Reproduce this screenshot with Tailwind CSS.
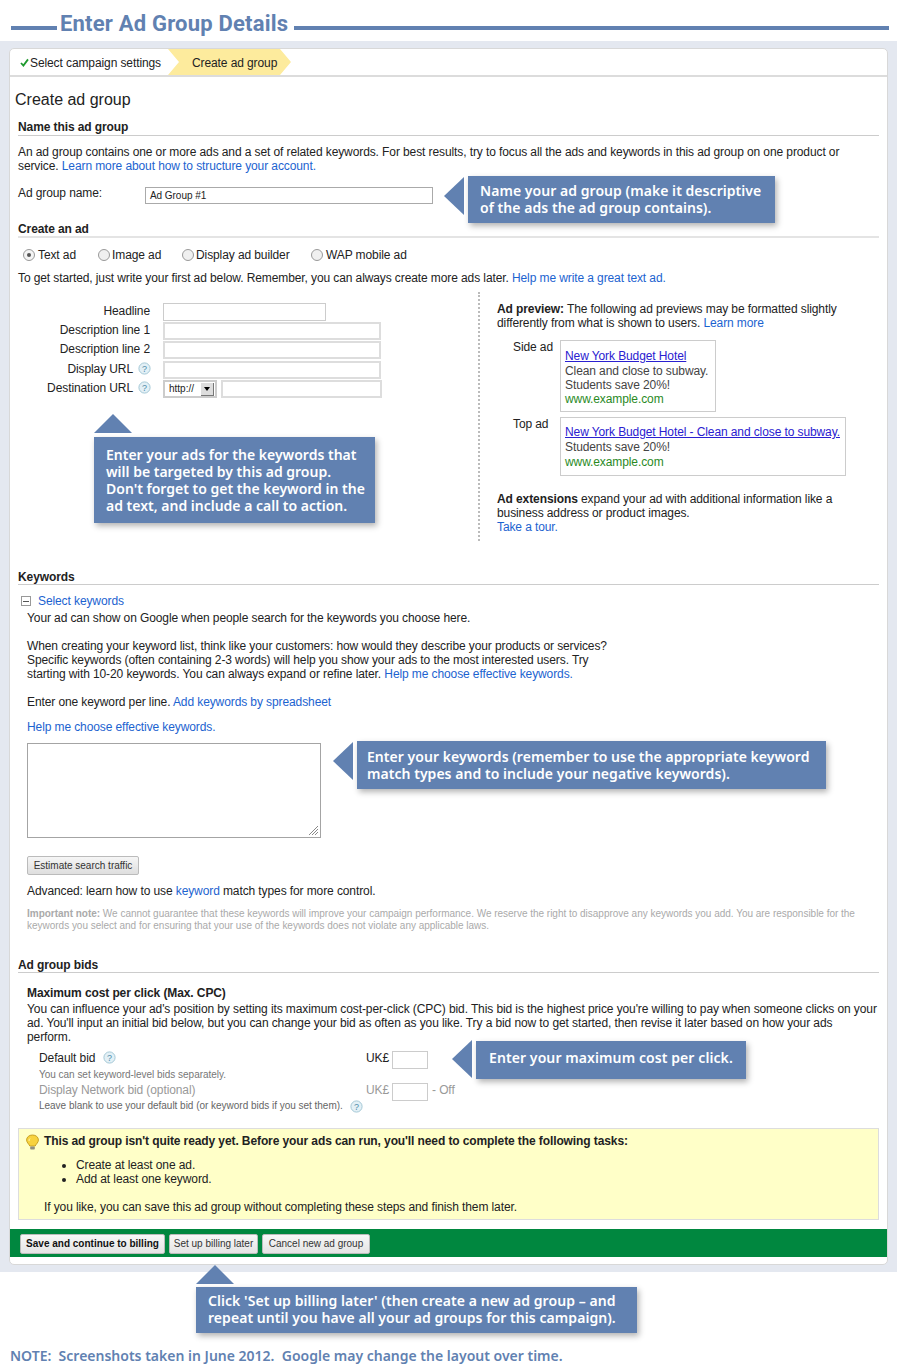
<!DOCTYPE html>
<html lang="en">
<head>
<meta charset="UTF-8" />
<title>Enter Ad Group Details</title>
<script src="https://cdn.jsdelivr.net/npm/@tailwindcss/browser@4"></script>
</head>
<body class="relative w-[900px] h-[1370px] bg-white overflow-hidden font-['Liberation_Sans',sans-serif] text-[12px] leading-[14px] tracking-[-0.1px] text-[#222]">

  <!-- page title -->
  <div class="h-[41px] flex items-start pl-[11px] pr-[11px]">
    <div class="w-[46px] h-[4px] mt-[26px] bg-[#6181b1]"></div>
    <div class="ml-[3px] mt-[10px] font-['Roboto',sans-serif] font-bold text-[22px] leading-[28px] tracking-[0.2px] text-[#6181b1] whitespace-nowrap">Enter Ad Group Details</div>
    <div class="flex-1 h-[4px] mt-[26px] ml-[6px] bg-[#6181b1]"></div>
  </div>

  <!-- grey panel -->
  <div class="w-[897px] h-[1231px] bg-[#e4e8f0] pt-[7px] pl-[9px]">
    <div class="w-[879px] h-[1217px] bg-white border border-[#d8d8d8] rounded-[5px] overflow-hidden">

      <!-- steps -->
      <div class="h-[28px] border-b-2 border-[#dcdcdc] flex items-center">
        <svg class="ml-[10px] mt-[1px] w-[9px] h-[9px]" viewBox="0 0 9 9"><path d="M1 5 L3.4 7.6 L8 1.4" fill="none" stroke="#1f9a2f" stroke-width="1.8"/></svg>
        <span class="ml-[1px] mt-[2px] w-[138px]">Select campaign settings</span>
        <div class="w-[123px] h-[26px] bg-[#fdeb9d] [clip-path:polygon(0_0,112px_0,123px_50%,112px_100%,0_100%,11px_50%)] pl-[24px] leading-[28px]">Create ad group</div>
      </div>

      <div class="pl-[8px] pr-[8px]">
        <h1 class="ml-[-3px] mt-[13px] text-[16px] leading-[20px] tracking-normal text-[#222]">Create ad group</h1>

        <!-- name section -->
        <div class="mt-[10px] h-[16px] font-bold border-b border-[#ccc]">Name this ad group</div>
        <p class="mt-[9px]">An ad group contains one or more ads and a set of related keywords. For best results, try to focus all the ads and keywords in this ad group on one product or<br />service. <a class="text-[#1c63d0]">Learn more about how to structure your account.</a></p>
        <div class="mt-[14px] h-[16px] flex">
          <div class="w-[127px] mt-[-1px]">Ad group name:</div>
          <div class="w-[288px] h-[17px] border border-[#aaa] pl-[4px] text-[10px] leading-[15px] tracking-[-0.05px]">Ad Group #1</div>
        </div>

        <!-- ad section -->
        <div class="mt-[19px] h-[16px] font-bold border-b-2 border-[#e4e4e4]">Create an ad</div>
        <div class="mt-[10px] pl-[5px] flex">
          <label class="w-[75px] flex items-center gap-[3px]"><span class="w-[12px] h-[12px] rounded-full border border-[#999] bg-[#f4f4f4] flex items-center justify-center"><span class="w-[4px] h-[4px] rounded-full bg-[#555]"></span></span>Text ad</label>
          <label class="w-[84px] flex items-center gap-[2px]"><span class="w-[12px] h-[12px] rounded-full border border-[#999] bg-[#f0f0f0]"></span>Image ad</label>
          <label class="w-[129px] flex items-center gap-[2px]"><span class="w-[12px] h-[12px] rounded-full border border-[#999] bg-[#f0f0f0]"></span>Display ad builder</label>
          <label class="flex items-center gap-[3px]"><span class="w-[12px] h-[12px] rounded-full border border-[#999] bg-[#f0f0f0]"></span>WAP mobile ad</label>
        </div>
        <p class="mt-[9px]">To get started, just write your first ad below. Remember, you can always create more ads later. <a class="text-[#1c63d0]">Help me write a great text ad.</a></p>

        <!-- ad form + preview -->
        <div class="mt-[7px] h-[249px] flex">
          <div class="w-[460px] pt-[11px]">
            <div class="h-[18px] flex"><div class="w-[132px] pt-[1px] text-right">Headline</div><div class="ml-[13px] w-[163px] h-[18px] border border-[#ccc]"></div></div>
            <div class="mt-[1px] h-[18px] flex"><div class="w-[132px] pt-[1px] text-right">Description line 1</div><div class="ml-[13px] w-[218px] h-[18px] border-2 border-[#ddd]"></div></div>
            <div class="mt-[1px] h-[18px] flex"><div class="w-[132px] pt-[1px] text-right">Description line 2</div><div class="ml-[13px] w-[218px] h-[18px] border-2 border-[#ddd]"></div></div>
            <div class="mt-[2px] h-[18px] flex">
              <div class="w-[115px] pt-[1px] text-right">Display URL</div>
              <svg class="ml-[5px] mt-[1px] w-[13px] h-[13px]" viewBox="0 0 13 13"><circle cx="6.5" cy="6.5" r="5.6" fill="#e3f0f6" stroke="#a4c8d6"/><text x="6.5" y="9.6" text-anchor="middle" font-size="9" fill="#4f8cab" font-family="Liberation Sans">?</text></svg>
              <div class="ml-[12px] w-[218px] h-[18px] border-2 border-[#ddd]"></div>
            </div>
            <div class="mt-[1px] h-[18px] flex">
              <div class="w-[115px] pt-[1px] text-right">Destination URL</div>
              <svg class="ml-[5px] mt-[1px] w-[13px] h-[13px]" viewBox="0 0 13 13"><circle cx="6.5" cy="6.5" r="5.6" fill="#e3f0f6" stroke="#a4c8d6"/><text x="6.5" y="9.6" text-anchor="middle" font-size="9" fill="#4f8cab" font-family="Liberation Sans">?</text></svg>
              <div class="ml-[12px] w-[54px] h-[18px] border-2 border-[#ccc] flex items-center pl-[4px] text-[10px] tracking-normal">
                http://
                <span class="ml-auto mr-[1px] w-[13px] h-[13px] bg-[#ddd] border-r border-b border-[#777] flex items-center justify-center"><span class="w-0 h-0 border-l-[3px] border-r-[3px] border-t-[4px] border-l-transparent border-r-transparent border-t-black"></span></span>
              </div>
              <div class="ml-[4px] w-[161px] h-[18px] border-2 border-[#ddd]"></div>
            </div>
          </div>

          <div class="border-l-2 border-dotted border-[#bbb] pl-[17px] pt-[10px] flex-1">
            <p><b>Ad preview:</b> The following ad previews may be formatted slightly<br />differently from what is shown to users. <a class="text-[#1c63d0]">Learn more</a></p>
            <div class="mt-[10px] flex">
              <div class="w-[63px] pl-[16px] whitespace-nowrap">Side ad</div>
              <div class="w-[156px] h-[72px] border border-[#ccc] pl-[4px] pt-[8px] text-[#444]">
                <a class="text-[#2a20d0] underline">New York Budget Hotel</a>
                <div class="mt-[1px]">Clean and close to subway.</div>
                <div>Students save 20%!</div>
                <div class="text-[#2a8a1f]">www.example.com</div>
              </div>
            </div>
            <div class="mt-[5px] flex">
              <div class="w-[63px] pl-[16px] whitespace-nowrap">Top ad</div>
              <div class="w-[286px] h-[59px] border border-[#ccc] pl-[4px] pt-[7px] text-[#444]">
                <a class="text-[#2a20d0] underline whitespace-nowrap">New York Budget Hotel - Clean and close to subway.</a>
                <div class="mt-[1px]">Students save 20%!</div>
                <div class="mt-[1px] text-[#2a8a1f]">www.example.com</div>
              </div>
            </div>
            <p class="mt-[16px]"><b>Ad extensions</b> expand your ad with additional information like a<br />business address or product images.<br /><a class="text-[#1c63d0]">Take a tour.</a></p>
          </div>
        </div>

        <!-- keywords section -->
        <div class="mt-[29px] h-[15px] font-bold border-b border-[#ccc]">Keywords</div>
        <div class="mt-[9px] flex items-center">
          <span class="ml-[3px] w-[10px] h-[10px] border border-[#999] flex items-center justify-center"><span class="w-[6px] h-[1px] bg-[#555]"></span></span>
          <a class="ml-[7px] text-[#1c63d0]">Select keywords</a>
        </div>
        <div class="pl-[9px]">
          <p class="mt-[3px]">Your ad can show on Google when people search for the keywords you choose here.</p>
          <p class="mt-[14px]">When creating your keyword list, think like your customers: how would they describe your products or services?<br />Specific keywords (often containing 2-3 words) will help you show your ads to the most interested users. Try<br />starting with 10-20 keywords. You can always expand or refine later. <a class="text-[#1c63d0]">Help me choose effective keywords.</a></p>
          <p class="mt-[14px]">Enter one keyword per line. <a class="text-[#1c63d0]">Add keywords by spreadsheet</a></p>
          <p class="mt-[11px]"><a class="text-[#1c63d0]">Help me choose effective keywords.</a></p>
          <div class="relative mt-[9px] w-[294px] h-[95px] border border-[#a4a4a4]">
            <svg class="absolute right-[2px] bottom-[2px] w-[9px] h-[9px]" viewBox="0 0 9 9"><path d="M0 9 L9 0 M3 9 L9 3 M6 9 L9 6" stroke="#888" fill="none"/></svg>
          </div>
          <button class="block mt-[18px] w-[112px] h-[19px] border border-[#bbb] rounded-[2px] bg-gradient-to-b from-[#f6f6f6] to-[#dedede] text-[10px] leading-[17px] tracking-normal text-[#333] text-center">Estimate search traffic</button>
          <p class="mt-[9px]">Advanced: learn how to use <a class="text-[#1c63d0]">keyword</a> match types for more control.</p>
          <p class="mt-[10px] text-[10px] leading-[12px] tracking-[-0.015px] text-[#aaa]"><b>Important note:</b> We cannot guarantee that these keywords will improve your campaign performance. We reserve the right to disapprove any keywords you add. You are responsible for the<br />keywords you select and for ensuring that your use of the keywords does not violate any applicable laws.</p>
        </div>

        <!-- bids section -->
        <div class="mt-[26px] h-[15px] font-bold border-b border-[#ccc]">Ad group bids</div>
        <div class="pl-[9px]">
          <div class="mt-[13px] font-bold">Maximum cost per click (Max. CPC)</div>
          <p class="mt-[2px] whitespace-nowrap">You can influence your ad's position by setting its maximum cost-per-click (CPC) bid. This bid is the highest price you're willing to pay when someone clicks on your<br />ad. You'll input an initial bid below, but you can change your bid as often as you like. Try a bid now to get started, then revise it later based on how your ads<br />perform.</p>
        </div>
        <div class="mt-[7px] pl-[21px]">
          <div class="h-[18px] flex">
            <div class="w-[64px]">Default bid</div>
            <svg class="w-[13px] h-[13px]" viewBox="0 0 13 13"><circle cx="6.5" cy="6.5" r="5.6" fill="#e3f0f6" stroke="#a4c8d6"/><text x="6.5" y="9.6" text-anchor="middle" font-size="9" fill="#4f8cab" font-family="Liberation Sans">?</text></svg>
            <div class="ml-[250px] w-[26px]">UK£</div>
            <div class="w-[36px] h-[18px] border border-[#ccc]"></div>
          </div>
          <div class="text-[10px] leading-[12px] tracking-[-0.02px] text-[#777]">You can set keyword-level bids separately.</div>
          <div class="mt-[2px] h-[18px] flex text-[#999]">
            <div class="w-[327px]">Display Network bid (optional)</div>
            <div class="w-[26px]">UK£</div>
            <div class="w-[36px] h-[18px] border border-[#ccc]"></div>
            <div class="ml-[4px]">- Off</div>
          </div>
          <div class="mt-[-1px] flex items-start text-[10px] leading-[12px] tracking-[-0.02px] text-[#666]">
            <span>Leave blank to use your default bid (or keyword bids if you set them).</span>
            <svg class="ml-[7px] w-[13px] h-[13px]" viewBox="0 0 13 13"><circle cx="6.5" cy="6.5" r="5.6" fill="#e3f0f6" stroke="#a4c8d6"/><text x="6.5" y="9.6" text-anchor="middle" font-size="9" fill="#4f8cab" font-family="Liberation Sans">?</text></svg>
          </div>
        </div>

        <!-- warning -->
        <div class="mt-[15px] w-[861px] h-[92px] bg-[#ffffc8] border border-[#ddd] pt-[5px] pl-[6px]">
          <div class="flex items-start">
            <svg class="w-[15px] h-[17px] shrink-0" viewBox="0 0 15 17"><path d="M7.5 1 C4 1 1.6 3.2 1.6 6 C1.6 8.4 3.6 9.6 4.8 12 L10.2 12 C11.4 9.6 13.4 8.4 13.4 6 C13.4 3.2 11 1 7.5 1 Z" fill="#f7d23e" stroke="#c9a227"/><path d="M5 4.5 C4.2 5.2 4 6 4.2 7" stroke="#fff6c0" fill="none"/><rect x="5.2" y="12.6" width="4.6" height="3" rx="0.8" fill="#8f8f80"/></svg>
            <b class="ml-[4px]">This ad group isn't quite ready yet. Before your ads can run, you'll need to complete the following tasks:</b>
          </div>
          <ul class="mt-[7px] ml-[51px] list-disc">
            <li>Create at least one ad.</li>
            <li>Add at least one keyword.</li>
          </ul>
          <p class="mt-[14px] ml-[19px]">If you like, you can save this ad group without completing these steps and finish them later.</p>
        </div>
      </div>

      <!-- action bar -->
      <div class="mt-[9px] h-[28px] bg-[#00873f] pl-[10px] pt-[2px] flex items-center gap-[4px] text-[10px] tracking-normal text-[#333]">
        <button class="w-[145px] h-[20px] border border-[#bbb] rounded-[2px] bg-gradient-to-b from-[#f8f8f8] to-[#e4e4e4] font-bold text-[#111] text-center">Save and continue to billing</button>
        <button class="w-[89px] h-[20px] border border-[#bbb] rounded-[2px] bg-gradient-to-b from-[#f8f8f8] to-[#e4e4e4] text-center">Set up billing later</button>
        <button class="w-[108px] h-[20px] border border-[#bbb] rounded-[2px] bg-gradient-to-b from-[#f8f8f8] to-[#e4e4e4] text-center">Cancel new ad group</button>
      </div>
    </div>
  </div>

  <div class="mt-[75px] ml-[10px] font-['Noto_Sans',sans-serif] font-semibold text-[14px] leading-[18px] tracking-normal text-[#6181b1]">NOTE:&nbsp; Screenshots taken in June 2012.&nbsp; Google may change the layout over time.</div>

  <!-- callouts over the screenshot -->
  <svg class="absolute left-[444px] top-[177px] w-[20px] h-[38px]" viewBox="0 0 20 38"><polygon points="20,0 20,38 0,19" fill="#6181b1"/></svg>
  <div class="absolute left-[468px] top-[176px] w-[307px] h-[47px] bg-[#6181b1] shadow-[2px_3px_6px_rgba(0,0,0,0.3)] pl-[12px] pt-[6px] font-['Noto_Sans',sans-serif] font-semibold text-[14px] leading-[17px] tracking-[0.05px] text-white whitespace-nowrap">Name your ad group (make it descriptive<br />of the ads the ad group contains).</div>

  <svg class="absolute left-[94px] top-[414px] w-[38px] h-[19px]" viewBox="0 0 38 19"><polygon points="0,19 38,19 19,0" fill="#6181b1"/></svg>
  <div class="absolute left-[94px] top-[437px] w-[281px] h-[86px] bg-[#6181b1] shadow-[2px_3px_6px_rgba(0,0,0,0.3)] pl-[12px] pt-[9px] font-['Noto_Sans',sans-serif] font-semibold text-[14px] leading-[17px] tracking-normal text-white whitespace-nowrap">Enter your ads for the keywords that<br />will be targeted by this ad group.<br />Don't forget to get the keyword in the<br />ad text, and include a call to action.</div>

  <svg class="absolute left-[333px] top-[742px] w-[20px] h-[38px]" viewBox="0 0 20 38"><polygon points="20,0 20,38 0,19" fill="#6181b1"/></svg>
  <div class="absolute left-[357px] top-[741px] w-[469px] h-[48px] bg-[#6181b1] shadow-[2px_3px_6px_rgba(0,0,0,0.3)] pl-[10px] pt-[7px] font-['Noto_Sans',sans-serif] font-semibold text-[14px] leading-[17px] tracking-[0.04px] text-white whitespace-nowrap">Enter your keywords (remember to use the appropriate keyword<br />match types and to include your negative keywords).</div>

  <svg class="absolute left-[452px] top-[1040px] w-[20px] h-[38px]" viewBox="0 0 20 38"><polygon points="20,0 20,38 0,19" fill="#6181b1"/></svg>
  <div class="absolute left-[476px] top-[1041px] w-[270px] h-[38px] bg-[#6181b1] shadow-[2px_3px_6px_rgba(0,0,0,0.3)] pl-[13px] font-['Noto_Sans',sans-serif] font-semibold text-[14px] leading-[34px] tracking-[0.09px] text-white whitespace-nowrap">Enter your maximum cost per click.</div>

  <svg class="absolute left-[196px] top-[1265px] w-[38px] h-[19px]" viewBox="0 0 38 19"><polygon points="0,19 38,19 19,0" fill="#6181b1"/></svg>
  <div class="absolute left-[196px] top-[1287px] w-[441px] h-[46px] bg-[#6181b1] shadow-[2px_3px_6px_rgba(0,0,0,0.3)] pl-[12px] pt-[5px] font-['Noto_Sans',sans-serif] font-semibold text-[14px] leading-[17px] tracking-[0.06px] text-white whitespace-nowrap">Click 'Set up billing later' (then create a new ad group – and<br />repeat until you have all your ad groups for this campaign).</div>
</body>
</html>
